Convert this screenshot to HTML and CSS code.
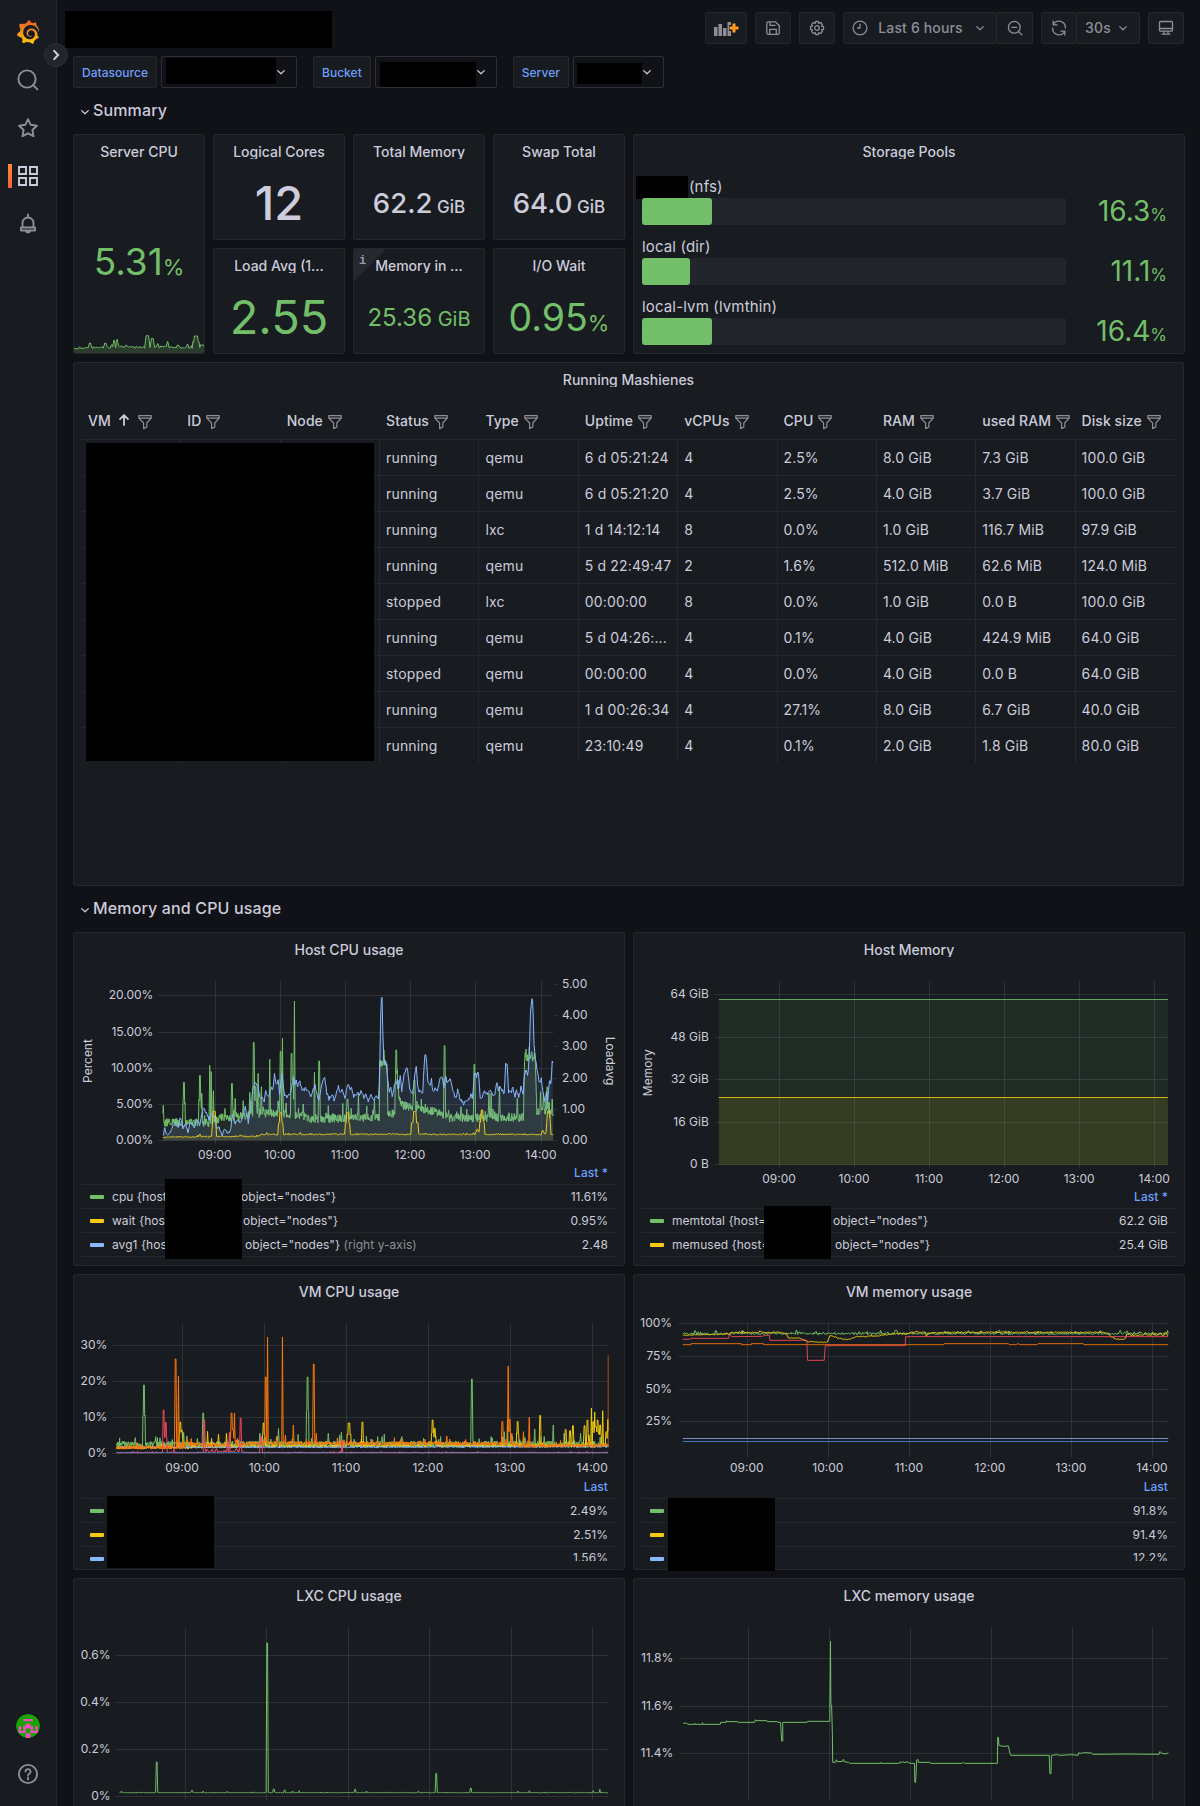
FILE: index.html
```html
<!DOCTYPE html>
<html lang="en">
<head>
  <meta charset="UTF-8">
  <title>Proxmox - Grafana</title>
  <link rel="stylesheet" href="styles.css">
</head>
<body>
  <svg class="defs" width="0" height="0">
    <defs>
      <linearGradient id="logoFill" x1="0" y1="1" x2="0" y2="0">
        <stop offset="0" stop-color="#fbca0a"/><stop offset="1" stop-color="#f05a28"/>
      </linearGradient>
      <symbol id="i-down" viewBox="0 0 16 16"><path d="M4.7 6.6 8 9.7l3.3-3.1"/></symbol>
      <symbol id="i-filter" viewBox="0 0 16 16"><path d="M1.8 1.6h12.4v2.6L9.8 9v4L6.6 14.6V9L1.8 4.2zM1.8 4.2h12.4"/></symbol>
    </defs>
  </svg>

  <nav class="sidebar">
    <svg class="logo" viewBox="0 0 24 24"><path fill="url(#logoFill)" d="M23.02 10.59a8.578 8.578 0 0 0-.862-3.034 8.911 8.911 0 0 0-1.789-2.445c.337-1.342-.413-2.505-.413-2.505-1.292-.08-2.113.4-2.416.62-.052-.02-.102-.044-.154-.064-.22-.089-.446-.172-.677-.247-.231-.073-.47-.14-.711-.197a9.867 9.867 0 0 0-.875-.161C14.557.753 12.94 0 12.94 0c-1.804 1.145-2.147 2.744-2.147 2.744l-.018.093c-.098.029-.2.057-.298.088-.138.042-.275.094-.413.143-.138.055-.275.107-.41.166a8.869 8.869 0 0 0-1.557.87l-.063-.029c-2.497-.955-4.716.195-4.716.195-.203 2.658.996 4.33 1.235 4.636a11.608 11.608 0 0 0-.607 2.635C1.636 12.677.953 15.014.953 15.014c1.926 2.214 4.171 2.351 4.171 2.351.003-.002.006-.002.006-.005.285.509.615.994.986 1.446.156.19.32.371.488.548-.704 2.009.099 3.68.099 3.68 2.144.08 3.553-.937 3.849-1.173a9.784 9.784 0 0 0 3.164.501h.08l.055-.003.107-.002.103-.005.003.002c1.01 1.44 2.788 1.646 2.788 1.646 1.264-1.332 1.337-2.653 1.337-2.94v-.058c0-.02-.003-.039-.003-.06.265-.187.52-.387.758-.6a7.875 7.875 0 0 0 1.415-1.7c1.43.083 2.437-.885 2.437-.885-.236-1.49-1.085-2.216-1.264-2.354l-.018-.013-.016-.013a.217.217 0 0 1-.031-.02c.008-.092.016-.18.02-.27.011-.162.016-.323.016-.48v-.253l-.005-.098-.008-.135a1.891 1.891 0 0 0-.01-.13c-.003-.042-.008-.083-.013-.125l-.016-.124-.018-.122a6.215 6.215 0 0 0-2.032-3.73 6.015 6.015 0 0 0-3.222-1.46 6.292 6.292 0 0 0-.85-.048l-.107.002h-.063l-.044.003-.104.008a4.777 4.777 0 0 0-3.335 1.695c-.332.4-.592.84-.768 1.297a4.594 4.594 0 0 0-.312 1.817l.003.091c.005.055.007.11.013.164a3.615 3.615 0 0 0 .698 1.82 3.53 3.53 0 0 0 1.827 1.282c.33.098.66.14.971.137.039 0 .078 0 .114-.002l.063-.003c.02 0 .041-.003.062-.003.034-.002.065-.007.099-.01.007 0 .018-.003.028-.003l.031-.005.06-.008a1.18 1.18 0 0 0 .112-.02c.036-.008.072-.013.109-.024a2.634 2.634 0 0 0 .914-.415c.028-.02.056-.041.085-.065a.248.248 0 0 0 .039-.35.244.244 0 0 0-.309-.06l-.078.042c-.09.044-.184.083-.283.116a2.476 2.476 0 0 1-.475.096c-.028.003-.054.006-.083.006l-.083.002c-.026 0-.054 0-.08-.002l-.102-.006h-.012l-.024.006c-.016-.003-.031-.003-.044-.006-.031-.002-.06-.007-.091-.01a2.59 2.59 0 0 1-.724-.213 2.557 2.557 0 0 1-.667-.438 2.52 2.52 0 0 1-.805-1.475 2.306 2.306 0 0 1-.029-.444l.006-.122v-.023l.002-.031c.003-.021.003-.04.005-.06a3.163 3.163 0 0 1 1.352-2.29 3.12 3.12 0 0 1 .937-.43 2.946 2.946 0 0 1 .776-.101h.06l.07.002.045.003h.026l.07.005a4.041 4.041 0 0 1 1.635.49 3.94 3.94 0 0 1 1.602 1.662 3.77 3.77 0 0 1 .397 1.414l.005.076.003.075c.002.026.002.05.002.075 0 .024.003.052 0 .07v.065l-.002.073-.008.174a6.195 6.195 0 0 1-.08.639 5.1 5.1 0 0 1-.267.927 5.31 5.31 0 0 1-.624 1.13 5.052 5.052 0 0 1-3.237 2.014 4.82 4.82 0 0 1-.649.066l-.039.003h-.287a6.607 6.607 0 0 1-1.716-.265 6.776 6.776 0 0 1-3.4-2.274 6.75 6.75 0 0 1-.746-1.15 6.616 6.616 0 0 1-.714-2.596l-.005-.083-.002-.02v-.056l-.003-.073v-.096l-.003-.104v-.07l.003-.163c.008-.22.026-.45.054-.678a8.707 8.707 0 0 1 .28-1.355c.128-.444.286-.872.473-1.277a7.04 7.04 0 0 1 1.456-2.1 5.925 5.925 0 0 1 .953-.763c.169-.111.343-.213.524-.306.089-.05.182-.091.273-.135.047-.02.093-.042.138-.062a7.177 7.177 0 0 1 .714-.267l.145-.045c.049-.015.098-.026.148-.041.098-.029.197-.052.296-.076.049-.013.1-.02.15-.033l.15-.032.151-.028.076-.013.075-.01.153-.024c.057-.01.114-.013.171-.023l.169-.021c.036-.003.073-.008.106-.01l.073-.008.036-.003.042-.002c.057-.003.114-.008.171-.01l.086-.006h.023l.037-.003.145-.007a7.999 7.999 0 0 1 1.708.125 7.917 7.917 0 0 1 2.048.68 8.253 8.253 0 0 1 1.672 1.09l.09.077.089.078c.06.052.114.107.171.159.057.052.112.106.166.16.052.055.107.107.159.164a8.671 8.671 0 0 1 1.41 1.978c.012.026.028.052.04.078l.04.078.075.156c.023.051.05.1.07.153l.065.15a8.848 8.848 0 0 1 .45 1.34.19.19 0 0 0 .201.142.186.186 0 0 0 .172-.184c.01-.246.002-.532-.024-.856z"/></svg>
    <svg class="nav-icon" viewBox="0 0 24 24"><circle cx="11" cy="11" r="8.6"/><path d="m17.2 17.2 4.2 4.2"/></svg>
    <svg class="nav-icon" viewBox="0 0 24 24"><path d="m12 3.2 2.7 5.6 6.2.9-4.5 4.3 1.1 6.2-5.5-2.9-5.5 2.9 1.1-6.2-4.5-4.3 6.2-.9z"/></svg>
    <div class="nav-active">
      <svg class="nav-icon" viewBox="0 0 24 24"><path d="M3 3h7v7H3zM14 3h7v7h-7zM3 14h7v7H3zM14 14h7v7h-7z"/></svg>
    </div>
    <svg class="nav-icon" viewBox="0 0 24 24"><path d="M6.5 15.5V11a5.500 5.500 0 0 1 11 0v4.500M12 5.500V2.500M5 15.500h14v3H5zM9.600 18.700a2.500 2.500 0 0 0 4.800 0"/></svg>
    <span class="grow"></span>
    <svg class="avatar" viewBox="0 0 24 24">
      <circle cx="12" cy="12" r="12" fill="#17a300"/>
      <path fill="#f04ec0" d="M7.300 4.900h9.700v2.400H7.300zM9.700 9.700h4.900v2.400H17v4.800h2.300v-4.800h2.400V19h-7.100v-4.500h-4.900V19H2.700v-6.900H5v4.800h2.300v-4.800h2.400zM9.700 19.300h4.900V24H9.700z"/>
    </svg>
    <svg class="nav-icon" viewBox="0 0 24 24"><circle cx="12" cy="12" r="9.100"/><path d="M9.500 9.600a2.500 2.500 0 1 1 3.700 2.200c-.8.500-1.200.8-1.200 1.800M12 15.600v1.800"/></svg>
    <span class="toggle"><svg viewBox="0 0 24 24"><path d="m10 7.500 4.300 4.500-4.300 4.500"/></svg></span>
  </nav>

  <main class="page">
    <header class="toolbar">
      <div class="mask dash-name"></div>
      <div class="tools">
        <button class="btn add"><svg width="26" height="18" viewBox="0 0 26 18"><path class="solid" d="M1 8h3.500v9H1zM5.500 5H9v12H5.500zM10 9h3.500v8H10zM14.500 3H18v3h-2v6h2v5h-3.500z"/><path class="plus" d="M21 4.500v9M16.500 9h9"/></svg></button>
        <button class="btn"><svg class="ic" viewBox="0 0 16 16"><path d="M3.500 1.800h6.800l4 4v7a1.500 1.500 0 0 1-1.500 1.500H3.300a1.500 1.500 0 0 1-1.500-1.500V3.300a1.500 1.500 0 0 1 1.500-1.500M5 2v3.400h5M4.700 14v-4.700h6.600V14"/></svg></button>
        <button class="btn"><svg class="ic" viewBox="0 0 16 16"><circle cx="8" cy="8" r="2.300"/><path d="m6.700 1.500-.5 1.900-1.700-.9-1.900 1.900.9 1.800-2 .500v2.600l2 .500-.9 1.800 1.900 1.900 1.700-.9.500 1.900h2.600l.5-1.900 1.700.9 1.900-1.900-.9-1.800 2-.500V6.700l-2-.500.9-1.800-1.900-1.900-1.700.9-.5-1.900z"/></svg></button>
        <div class="group">
          <button class="btn range"><svg class="ic" viewBox="0 0 16 16"><circle cx="8" cy="8" r="6.900"/><path d="M8 4.200V8H5.500"/></svg><span>Last 6 hours</span><svg class="ic chev"><use href="#i-down"/></svg></button>
          <button class="btn"><svg class="ic" viewBox="0 0 16 16"><circle cx="7.300" cy="7.300" r="5.900"/><path d="M4.800 7.300h5M11.600 11.600l3.200 3.200"/></svg></button>
        </div>
        <div class="group">
          <button class="btn"><svg class="ic" viewBox="0 0 16 16"><path d="M2.200 1v3.900h3.900M2.400 4.700A6.300 6.300 0 0 1 14.300 8M13.800 15v-3.900H9.900M13.600 11.300A6.300 6.300 0 0 1 1.700 8"/></svg></button>
          <button class="btn rate"><span>30s</span><svg class="ic chev"><use href="#i-down"/></svg></button>
        </div>
        <button class="btn"><svg class="ic" viewBox="0 0 16 16"><path d="M2.500 1.500h11a1 1 0 0 1 1 1v7.700a1 1 0 0 1-1 1h-11a1 1 0 0 1-1-1V2.500a1 1 0 0 1 1-1M1.500 8.500h13M6 11.500v2.700M10 11.500v2.700M4 14.200h8"/></svg></button>
      </div>
    </header>

    <div class="vars">
      <div class="var"><label>Datasource</label><div class="select s1"><i class="mask"></i><svg class="ic"><use href="#i-down"/></svg></div></div>
      <div class="var"><label>Bucket</label><div class="select s2"><i class="mask"></i><svg class="ic"><use href="#i-down"/></svg></div></div>
      <div class="var"><label>Server</label><div class="select s3"><i class="mask"></i><svg class="ic"><use href="#i-down"/></svg></div></div>
    </div>

    <h2 class="row-title"><svg class="ic"><use href="#i-down"/></svg>Summary</h2>

    <section class="summary">
      <div class="panel tall">
        <h3>Server CPU</h3>
        <div class="stat green v-cpu">5.31<small>%</small></div>
        <svg id="spark" width="130" height="20"></svg>
      </div>
      <div class="panel"><h3>Logical Cores</h3><div class="stat v-big">12</div></div>
      <div class="panel"><h3>Total Memory</h3><div class="stat v-mem">62.2<small>&nbsp;GiB</small></div></div>
      <div class="panel"><h3>Swap Total</h3><div class="stat v-mem">64.0<small>&nbsp;GiB</small></div></div>
      <div class="panel storage">
        <h3>Storage Pools</h3>
        <div class="pools">
          <div class="pool"><label><i class="mask"></i>(nfs)</label><div class="bar"><b style="width: 16.5%"></b></div><span>16.3<small>%</small></span></div>
          <div class="pool"><label>local (dir)</label><div class="bar"><b style="width: 11.3%"></b></div><span>11.1<small>%</small></span></div>
          <div class="pool"><label>local-lvm (lvmthin)</label><div class="bar"><b style="width: 16.5%"></b></div><span>16.4<small>%</small></span></div>
        </div>
      </div>
      <div class="panel"><h3>Load Avg (1...</h3><div class="stat green v-big">2.55</div></div>
      <div class="panel info"><h3>Memory in ...</h3><div class="stat green v-used">25.36<small>&nbsp;GiB</small></div></div>
      <div class="panel"><h3>I/O Wait</h3><div class="stat green v-wait">0.95<small>%</small></div></div>
    </section>

    <section class="panel machines">
      <h3>Running Mashienes</h3>
      <div class="table-wrap">
        <table>
          <thead>
            <tr>
              <th>VM<svg class="ic sort" viewBox="0 0 16 16"><path d="M8 13V3.500M4 7.200 8 3.200l4 4"/></svg><svg class="ic"><use href="#i-filter"/></svg></th>
              <th>ID<svg class="ic"><use href="#i-filter"/></svg></th>
              <th>Node<svg class="ic"><use href="#i-filter"/></svg></th>
              <th>Status<svg class="ic"><use href="#i-filter"/></svg></th>
              <th>Type<svg class="ic"><use href="#i-filter"/></svg></th>
              <th>Uptime<svg class="ic"><use href="#i-filter"/></svg></th>
              <th>vCPUs<svg class="ic"><use href="#i-filter"/></svg></th>
              <th>CPU<svg class="ic"><use href="#i-filter"/></svg></th>
              <th>RAM<svg class="ic"><use href="#i-filter"/></svg></th>
              <th>used RAM<svg class="ic"><use href="#i-filter"/></svg></th>
              <th>Disk size<svg class="ic"><use href="#i-filter"/></svg></th>
            </tr>
          </thead>
          <tbody>
            <tr><td></td><td></td><td></td><td>running</td><td>qemu</td><td>6 d 05:21:24</td><td>4</td><td>2.5%</td><td>8.0 GiB</td><td>7.3 GiB</td><td>100.0 GiB</td></tr>
            <tr><td></td><td></td><td></td><td>running</td><td>qemu</td><td>6 d 05:21:20</td><td>4</td><td>2.5%</td><td>4.0 GiB</td><td>3.7 GiB</td><td>100.0 GiB</td></tr>
            <tr><td></td><td></td><td></td><td>running</td><td>lxc</td><td>1 d 14:12:14</td><td>8</td><td>0.0%</td><td>1.0 GiB</td><td>116.7 MiB</td><td>97.9 GiB</td></tr>
            <tr><td></td><td></td><td></td><td>running</td><td>qemu</td><td>5 d 22:49:47</td><td>2</td><td>1.6%</td><td>512.0 MiB</td><td>62.6 MiB</td><td>124.0 MiB</td></tr>
            <tr><td></td><td></td><td></td><td>stopped</td><td>lxc</td><td>00:00:00</td><td>8</td><td>0.0%</td><td>1.0 GiB</td><td>0.0 B</td><td>100.0 GiB</td></tr>
            <tr><td></td><td></td><td></td><td>running</td><td>qemu</td><td>5 d 04:26:...</td><td>4</td><td>0.1%</td><td>4.0 GiB</td><td>424.9 MiB</td><td>64.0 GiB</td></tr>
            <tr><td></td><td></td><td></td><td>stopped</td><td>qemu</td><td>00:00:00</td><td>4</td><td>0.0%</td><td>4.0 GiB</td><td>0.0 B</td><td>64.0 GiB</td></tr>
            <tr><td></td><td></td><td></td><td>running</td><td>qemu</td><td>1 d 00:26:34</td><td>4</td><td>27.1%</td><td>8.0 GiB</td><td>6.7 GiB</td><td>40.0 GiB</td></tr>
            <tr><td></td><td></td><td></td><td>running</td><td>qemu</td><td>23:10:49</td><td>4</td><td>0.1%</td><td>2.0 GiB</td><td>1.8 GiB</td><td>80.0 GiB</td></tr>
          </tbody>
        </table>
        <div class="mask"></div>
      </div>
    </section>

    <h2 class="row-title"><svg class="ic"><use href="#i-down"/></svg>Memory and CPU usage</h2>

    <section class="charts">
      <div class="panel host">
        <h3>Host CPU usage</h3>
        <svg id="hostCpu" width="550" height="195"></svg>
        <div class="legend">
          <div class="legend-head">Last *</div>
          <div class="item c-green"><span class="name n1">cpu {host</span><span>object="nodes"}</span><em>11.61%</em></div>
          <div class="item c-yellow"><span class="name n2">wait {hos</span><span>object="nodes"}</span><em>0.95%</em></div>
          <div class="item c-blue"><span class="name n3">avg1 {hos</span><span>object="nodes"} <u>(right y-axis)</u></span><em>2.48</em></div>
          <div class="mask m-host"></div>
        </div>
      </div>
      <div class="panel host">
        <h3>Host Memory</h3>
        <svg id="hostMem" width="550" height="219"></svg>
        <div class="legend">
          <div class="legend-head">Last *</div>
          <div class="item c-green"><span class="name n4">memtotal {host=</span><span>object="nodes"}</span><em>62.2 GiB</em></div>
          <div class="item c-yellow"><span class="name n5">memused {host=</span><span>object="nodes"}</span><em>25.4 GiB</em></div>
          <div class="mask m-mem"></div>
        </div>
      </div>
      <div class="panel vm">
        <h3>VM CPU usage</h3>
        <svg id="vmCpu" width="550" height="167"></svg>
        <div class="legend">
          <div class="legend-head">Last</div>
          <div class="item c-green"><em>2.49%</em></div>
          <div class="item c-yellow"><em>2.51%</em></div>
          <div class="item c-blue cut"><em>1.56%</em></div>
          <div class="mask m-vm1"></div>
        </div>
      </div>
      <div class="panel vm">
        <h3>VM memory usage</h3>
        <svg id="vmMem" width="550" height="167"></svg>
        <div class="legend">
          <div class="legend-head">Last</div>
          <div class="item c-green"><em>91.8%</em></div>
          <div class="item c-yellow"><em>91.4%</em></div>
          <div class="item c-blue cut"><em>12.2%</em></div>
          <div class="mask m-vm2"></div>
        </div>
      </div>
      <div class="panel lxc">
        <h3>LXC CPU usage</h3>
        <svg id="lxcCpu" width="550" height="192"></svg>
      </div>
      <div class="panel lxc">
        <h3>LXC memory usage</h3>
        <svg id="lxcMem" width="550" height="192"></svg>
      </div>
    </section>
  </main>
  <script src="charts.js"></script>
</body>
</html>
```
FILE: styles.css
```css
* {
  box-sizing: border-box;
}

body {
  margin: 0;
  height: 1806px;
  overflow: hidden;
  display: flex;
  background: #111217;
  color: #ccccdc;
  font: 14px/20px Inter, "Liberation Sans", sans-serif;
  letter-spacing: 0.01071em;
}

svg {
  display: block;
}

.defs {
  position: absolute;
}

.mask {
  display: block;
  background: #000;
}

.ic {
  width: 16px;
  height: 16px;
  flex: none;
  fill: none;
  stroke: currentColor;
  stroke-width: 1.3;
  stroke-linejoin: round;
  stroke-linecap: round;
}

/* sidebar */
.sidebar {
  position: relative;
  width: 57px;
  height: 1806px;
  flex: none;
  padding: 20px 0;
  display: flex;
  flex-direction: column;
  align-items: center;
  gap: 24px;
  background: #181b1f;
  border-right: 1px solid #25272c;
}

.logo {
  width: 24px;
  height: 24px;
}

.nav-icon {
  width: 24px;
  height: 24px;
  fill: none;
  stroke: #8e8e9a;
  stroke-width: 1.9;
  stroke-linecap: round;
  stroke-linejoin: round;
}

.nav-active {
  width: 40px;
  display: flex;
  justify-content: center;
  background: linear-gradient(#ff8833, #f55f3e) 0 0 / 4px 24px no-repeat;
}

.nav-active .nav-icon {
  stroke: #ccccdc;
  stroke-linejoin: miter;
}

.grow {
  flex: 1;
}

.avatar {
  width: 24px;
  height: 24px;
  border-radius: 50%;
}

.toggle {
  position: absolute;
  left: 44px;
  top: 43px;
  width: 24px;
  height: 24px;
  border-radius: 50%;
  background: #22252b;
  border: 1px solid #2d2f36;
}

.toggle svg {
  width: 22px;
  height: 22px;
  fill: none;
  stroke: #ccccdc;
  stroke-width: 2.3;
  stroke-linecap: round;
}

/* toolbar */
.page {
  flex: 1;
  padding: 0 15px 0 16px;
}

.toolbar {
  height: 56px;
  padding-right: 1px;
  display: flex;
  justify-content: space-between;
  margin-left: -8px;
}

.dash-name {
  width: 267px;
  height: 37px;
  margin-top: 11px;
}

.tools {
  display: flex;
  gap: 8px;
  padding-top: 12px;
}

.group {
  display: flex;
}

.group .btn + .btn {
  border-left: 0;
  width: 36px;
}

.btn {
  width: 36px;
  height: 32px;
  padding: 0;
  display: flex;
  align-items: center;
  justify-content: center;
  background: #181b1f;
  border: 1px solid #25272c;
  border-radius: 2px;
  color: #8e8e99;
  font: inherit;
  font-weight: 500;
  letter-spacing: 0.01071em;
}

.btn.add {
  width: 42px;
}

.solid {
  fill: #8e8e99;
}

.plus {
  stroke: #ff9a1f;
  stroke-width: 3;
}

.btn.range {
  width: 154px;
  gap: 9px;
}

.range span {
  margin-left: 1px;
}

.group .btn.rate {
  width: 63px;
  gap: 4px;
}

/* template variables */
.vars {
  display: flex;
  gap: 16px;
}

.var {
  display: flex;
  gap: 4px;
}

.var label {
  height: 32px;
  padding: 0 8px;
  background: #181b1f;
  border: 1px solid #25272c;
  border-radius: 2px;
  color: #6e9fff;
  font-size: 12px;
  font-weight: 500;
  line-height: 31px;
  letter-spacing: 0.002em;
}

.select {
  height: 32px;
  display: flex;
  border: 1px solid #2d2f36;
  border-radius: 2px;
  padding-left: 4px;
}

.select .ic {
  margin: 7px 0 0 -3px;
}

.s1 { width: 136px; }
.s1 .mask { width: 110px; height: 26px; margin-top: 1px; }
.s2 { width: 122px; }
.s2 .mask { width: 96px; height: 25px; margin-top: 5px; }
.s3 { width: 91px; padding-left: 3px; }
.s3 .mask { width: 65px; height: 21px; margin-top: 6px; }

.row-title {
  height: 30px;
  margin: 8px 0;
  padding: 0 0 2px 4px;
  display: flex;
  align-items: center;
  font-size: 16px;
  font-weight: 500;
}

.row-title .ic {
  margin-top: 3px;
}

/* panels */
.panel {
  background: #181b1f;
  border: 1px solid #25272c;
  border-radius: 2px;
  overflow: hidden;
}

.panel h3 {
  height: 16px;
  margin: 8px 0 11px;
  overflow: hidden;
  text-align: center;
  font-size: 14px;
  font-weight: 500;
  line-height: 18px;
  letter-spacing: 0;
}

.summary {
  display: grid;
  grid-template-columns: repeat(4, 132px) 552px;
  grid-template-rows: 106px 106px;
  gap: 8px;
}

.tall,
.storage {
  grid-row: span 2;
}

.tall {
  display: flex;
  flex-direction: column;
  justify-content: space-between;
}

.stat {
  text-align: center;
  font-weight: 500;
  white-space: nowrap;
  letter-spacing: 0;
}

.green {
  color: #73bf69;
  font-weight: 400;
}

.v-cpu { font-size: 37px; line-height: 40px; margin-top: 25px; }
.v-cpu small { font-size: 22px; }
.v-big { font-size: 47px; line-height: 66px; }
.v-mem { font-size: 27.5px; line-height: 67px; }
.v-mem small { font-size: 17px; }
.v-used { font-size: 24px; line-height: 68px; }
.v-used small { font-size: 20px; }
.v-wait { font-size: 37.5px; line-height: 67px; }
.v-wait small { font-size: 22px; }

.info {
  position: relative;
}

.info::before {
  content: "";
  position: absolute;
  left: 0;
  top: 0;
  border: 16px solid transparent;
  border-color: #25282f transparent transparent #25282f;
}

.info::after {
  content: "i";
  position: absolute;
  left: 5px;
  top: 1px;
  color: #9a9aa6;
  font: bold 12px "Liberation Mono", monospace;
  line-height: 22px;
}

.pools {
  padding: 7px 8px 0;
}

.pool {
  display: grid;
  grid-template-columns: 424px 1fr;
  grid-template-rows: 20px 27px;
  row-gap: 1px;
  margin-bottom: 12px;
}

.pool label {
  grid-column: span 2;
  display: flex;
  font-size: 15px;
}

.pool label .mask {
  width: 52px;
  height: 23px;
  margin: -1px 1px 0 -6px;
}

.bar {
  background: #22252b;
  border-radius: 2px;
}

.bar b {
  display: block;
  height: 27px;
  border-radius: 3px;
  background: #73bf69;
}

.pool span {
  padding-right: 9px;
  text-align: right;
  color: #73bf69;
  font-size: 28px;
  line-height: 27px;
  letter-spacing: 0;
}

.pool small {
  font-size: 17px;
}

/* machines table */
.machines {
  width: 1111px;
  height: 524px;
  margin-top: 8px;
}

.table-wrap {
  position: relative;
  padding: 5px 8px;
}

.table-wrap .mask {
  position: absolute;
  left: 12px;
  top: 45px;
  width: 288px;
  height: 318px;
}

table {
  width: 1093px;
  table-layout: fixed;
  border-collapse: separate;
  border-spacing: 0;
}

th {
  height: 36px;
  padding: 0 0 0 6px;
  text-align: left;
  font-weight: 500;
  letter-spacing: 0.004em;
  white-space: nowrap;
}

th .ic {
  display: inline-block;
  margin-left: 4px;
  vertical-align: -4px;
  color: #8e8e99;
  stroke-width: 1.2;
}

th .sort {
  color: #ccccdc;
  stroke-width: 1.8;
  margin-left: 5px;
  margin-right: 1px;
  vertical-align: -2px;
}

td {
  height: 36px;
  padding: 0 0 0 6px;
  border-top: 1px solid #25272c;
  border-right: 1px solid #25272c;
  white-space: nowrap;
}

td:last-child {
  border-right: 0;
}

/* charts */
.charts {
  display: grid;
  grid-template-columns: 552px 552px;
  gap: 8px;
}

.host { height: 334px; }
.vm { height: 296px; overflow: visible; }
.lxc { height: 296px; }

.charts text {
  font-size: 12px;
  fill: #ccccdc;
  letter-spacing: 0;
}

.legend {
  position: relative;
  margin: 0 8px;
  font-size: 12px;
  letter-spacing: 0.004em;
}

.legend-head {
  height: 21px;
  padding-right: 8px;
  text-align: right;
  line-height: 20px;
  font-weight: 500;
  color: #6e9fff;
}

.item {
  height: 24px;
  padding: 0 8px;
  display: flex;
  align-items: center;
  border-top: 1px solid #25272c;
  white-space: pre;
}

.host .item:nth-last-child(2) {
  height: 25px;
  border-bottom: 1px solid #25272c;
}

.item::before {
  content: "";
  width: 14px;
  height: 4px;
  margin-right: 8px;
  border-radius: 1px;
}

.c-green::before { background: #73bf69; }
.c-yellow::before { background: #f2cc0c; }
.c-blue::before { background: #8ab8ff; }

.item em {
  margin-left: auto;
  font-style: normal;
}

.item u {
  color: #8e8e99;
  text-decoration: none;
}

.item.cut em {
  align-self: flex-start;
  height: 14px;
  overflow: hidden;
  line-height: 21px;
}

.n1 { width: 129px; }
.n2 { width: 131px; }
.n3 { width: 133px; }
.n4 { width: 161px; }
.n5 { width: 163px; }

.legend .mask {
  position: absolute;
}

.m-host { left: 83px; top: 16px; width: 77px; height: 80px; }
.m-mem { left: 122px; top: 19px; width: 67px; height: 53px; }
.m-vm1 { left: 25px; top: 19px; width: 107px; height: 72px; }
.m-vm2 { left: 26px; top: 21px; width: 107px; height: 73px; }
```
FILE: charts.js
```js
const GREEN = "#73bf69", YELLOW = "#f2cc0c", BLUE = "#8ab8ff", ORANGE = "#ff780a", RED = "#f2495c", DARKBLUE = "#5794f2";

let seed = 7;
function rand() {
  seed = (seed * 16807) % 2147483647;
  return seed / 2147483647;
}

// value of a broken line at x
function at(knots, x) {
  for (let i = 1; i < knots.length; i++) {
    if (x <= knots[i][0]) {
      const [x0, y0] = knots[i - 1], [x1, y1] = knots[i];
      return x1 === x0 ? y1 : y0 + (y1 - y0) * (x - x0) / (x1 - x0);
    }
  }
  return knots[knots.length - 1][1];
}

// base line with jitter and spikes [x, top, halfWidth]
function noisy(knots, amp, spikes = [], step = 1, burst = 0.06) {
  const out = [];
  const end = knots[knots.length - 1][0];
  for (let x = knots[0][0]; x <= end; x += step) {
    let y = at(knots, x) + (rand() - 0.5) * amp;
    if (rand() < burst) y -= amp * rand() * 1.3;
    for (const [sx, top, w = 1.6] of spikes) {
      const d = Math.abs(x - sx);
      if (d <= w) y = Math.min(y, d <= w / 2 ? top : top + (y - top) * 0.5);
    }
    out.push([x, y]);
  }
  return out;
}

function chart(id, c) {
  const X = v => v / c.kx - c.dx;
  const Y = v => v / 3 - c.dy;
  const snap = v => Math.floor(v) + 0.5;
  let s = "";
  const grid = 'stroke="rgba(240,250,255,0.1)"';
  (c.y || []).forEach(([v, label]) => {
    s += `<path ${grid} d="M${X(c.left)} ${snap(Y(v))}H${X(c.right)}"/>`;
    s += `<text x="${X(c.labelX)}" y="${Y(v) + 3.7}" text-anchor="end">${label}</text>`;
  });
  (c.x || []).forEach((v, i) => {
    s += `<path ${grid} d="M${snap(X(v))} ${Y(c.top)}V${Y(c.bottom)}"/>`;
    if (c.timeY) s += `<text x="${X(v) - 0.4}" y="${Y(c.timeY) + 4.5}" text-anchor="middle">${String(9 + i).padStart(2, "0")}:00</text>`;
  });
  (c.y2 || []).forEach(([v, label]) => {
    s += `<path ${grid} d="M${X(1357)} ${snap(Y(v))}h4"/>`;
    s += `<text x="${X(1381)}" y="${Y(v) + 4}">${label}</text>`;
  });
  (c.names || []).forEach(([x, y, text, deg]) => {
    s += `<text transform="translate(${X(x)} ${Y(y)}) rotate(${deg})" y="4" text-anchor="middle">${text}</text>`;
  });
  c.series.forEach(({ pts, color, fill = 0, opacity = 1 }) => {
    const d = pts.map(([x, y]) => X(x).toFixed(2) + " " + Y(y).toFixed(2)).join("L");
    if (fill) s += `<path fill="${color}" fill-opacity="${fill}" d="M${d}V${Y(c.zero)}H${X(pts[0][0])}Z"/>`;
    s += `<path fill="none" stroke="${color}" stroke-opacity="${opacity}" d="M${d}"/>`;
  });
  document.getElementById(id).innerHTML = s;
}

chart("spark", {
  kx: 2.613, dx: 74, dy: 333, zero: 1062,
  series: [{
    color: GREEN, fill: 0.2,
    pts: noisy([[192, 1046], [215, 1044], [330, 1040], [380, 1043], [420, 1040], [500, 1043], [535, 1040]], 6,
      [[235, 1029, 4], [275, 1029, 3], [298, 1020, 3], [306, 1018, 3], [330, 1035, 3], [385, 1007, 6], [398, 1015, 4], [412, 1030, 3], [438, 1024, 3], [465, 1035, 3], [490, 1032, 3], [512, 1008, 9], [529, 1034, 3]], 2)
  }]
});

chart("hostCpu", {
  kx: 2.751, dx: 14, dy: 88, left: 271, right: 1357, labelX: 257, top: 304, bottom: 792, timeY: 824, zero: 781,
  y: [[346, "20.00%"], [457, "15.00%"], [565, "10.00%"], [673, "5.00%"], [781, "0.00%"]],
  y2: [[312, "5.00"], [405, "4.00"], [498, "3.00"], [594, "2.00"], [688, "1.00"], [780, "0.00"]],
  x: [427, 606, 785, 964, 1143, 1324],
  names: [[76, 543, "Percent", -90], [1512, 543, "Loadavg", 90]],
  series: [
    {
      color: GREEN, fill: 0.1,
      pts: noisy([[283, 728], [410, 728], [440, 714], [500, 712], [530, 700], [600, 700], [655, 705], [700, 718], [878, 710], [880, 548], [900, 548], [902, 700], [925, 700], [928, 640], [940, 675], [1050, 700], [1070, 714], [1275, 712], [1278, 535], [1307, 530], [1312, 700], [1330, 690], [1357, 705]], 26,
        [[284, 676], [341, 607, 3], [385, 586, 3], [390, 640], [412, 556], [416, 575], [422, 632], [473, 610, 2], [482, 655], [504, 662], [522, 637], [533, 487, 2], [538, 620, 3], [545, 580], [554, 620], [577, 538], [600, 663], [607, 514, 2], [612, 474], [637, 520, 2], [640, 600, 4], [645, 363], [669, 672], [700, 577], [713, 543, 2], [791, 657, 3], [821, 640], [865, 657], [891, 510], [925, 510, 3], [930, 600], [975, 600, 3], [1058, 497, 2.5], [1103, 680], [1140, 553, 2.5], [1180, 640], [1186, 640], [1209, 620], [1258, 655], [1280, 517], [1298, 515], [1322, 635], [1330, 640], [1340, 620], [1354, 657]])
    },
    {
      color: YELLOW, fill: 0.1,
      pts: noisy([[283, 771], [545, 769], [555, 763], [1357, 763]], 4,
        [[385, 762, 3], [424, 694, 6], [607, 697, 6], [791, 697, 6], [976, 694, 9], [1148, 748, 5], [1161, 690, 6], [1328, 752, 3], [1344, 694, 6]], 2)
    },
    {
      color: BLUE, fill: 0.12,
      pts: noisy([[284, 765], [288, 748], [296, 765], [304, 760], [310, 735], [318, 728], [325, 740], [332, 710], [338, 745], [346, 735], [352, 755], [360, 725], [368, 745], [376, 720], [384, 735], [390, 700], [396, 680], [402, 700], [410, 720], [416, 700], [424, 705], [430, 735], [438, 745], [446, 765], [454, 750], [462, 765], [470, 745], [474, 705], [480, 730], [488, 722], [496, 725], [504, 700], [510, 682], [518, 725], [526, 660], [532, 620], [538, 605], [544, 615], [550, 655], [554, 650], [562, 660], [566, 636], [574, 645], [582, 620], [586, 630], [590, 575], [593, 610], [600, 605], [604, 640], [610, 585], [618, 645], [626, 650], [634, 640], [642, 590], [646, 612], [650, 600], [654, 620], [658, 600], [666, 630], [676, 628], [686, 640], [690, 650], [702, 615], [706, 640], [712, 665], [718, 620], [727, 585], [734, 640], [740, 658], [748, 640], [754, 660], [766, 617], [772, 640], [776, 625], [784, 655], [791, 610], [796, 625], [802, 622], [808, 650], [816, 640], [824, 645], [828, 630], [836, 650], [842, 638], [848, 665], [856, 645], [864, 658], [870, 650], [877, 655], [880, 530], [883, 360], [886, 352], [889, 500], [892, 555], [896, 540], [902, 600], [906, 635], [910, 622], [914, 648], [920, 620], [928, 600], [932, 628], [936, 590], [940, 630], [946, 590], [955, 556], [962, 625], [970, 640], [980, 555], [985, 625], [990, 635], [998, 638], [1003, 530], [1007, 527], [1012, 605], [1018, 610], [1022, 600], [1026, 635], [1032, 620], [1038, 630], [1044, 600], [1050, 585], [1056, 625], [1060, 585], [1064, 605], [1074, 600], [1082, 635], [1088, 655], [1094, 630], [1100, 655], [1110, 672], [1116, 660], [1122, 665], [1130, 645], [1135, 660], [1140, 575], [1146, 590], [1151, 567], [1156, 655], [1162, 650], [1168, 632], [1176, 645], [1184, 625], [1190, 650], [1196, 640], [1202, 605], [1206, 630], [1210, 615], [1216, 635], [1222, 635], [1226, 555], [1230, 552], [1234, 635], [1240, 640], [1246, 625], [1252, 650], [1256, 630], [1262, 655], [1268, 620], [1274, 640], [1278, 580], [1283, 570], [1287, 590], [1291, 530], [1294, 400], [1298, 362], [1301, 368], [1304, 490], [1308, 540], [1314, 575], [1318, 605], [1324, 598], [1328, 625], [1334, 670], [1338, 640], [1342, 660], [1346, 605], [1351, 610], [1354, 540], [1357, 548]], 12, [], 2, 0)
    }
  ]
});

chart("hostMem", {
  kx: 2.703, dx: 14, dy: 88, left: 257, right: 1483, labelX: 240, top: 304, bottom: 864, timeY: 895, zero: 854,
  y: [[342, "64 GiB"], [472, "48 GiB"], [598, "32 GiB"], [727, "16 GiB"], [853, "0 B"]],
  x: [431, 634, 836, 1039, 1242, 1445],
  names: [[77, 578, "Memory", -90]],
  series: [
    { color: GREEN, fill: 0.1, opacity: 0.85, pts: [[267, 358.500], [1481, 358.500]] },
    { color: YELLOW, fill: 0.1, opacity: 0.85, pts: [[267, 652.500], [1481, 652.500]] }
  ]
});

chart("vmCpu", {
  kx: 2.751, dx: 14, dy: 50, left: 144, right: 1508, labelX: 130, top: 190, bottom: 594, timeY: 623,
  y: [[256, "30%"], [364, "20%"], [472, "10%"], [580, "0%"]],
  x: [337, 563, 788, 1013, 1239, 1465],
  series: [
    {
      color: GREEN,
      pts: noisy([[155, 553], [1508, 553]], 20,
        [[207, 533], [231, 375, 3], [263, 530], [340, 517], [394, 459, 2], [550, 520], [601, 505], [681, 351, 3], [738, 520], [774, 517], [886, 530], [940, 530], [1133, 357, 2.5], [1186, 530], [1222, 515], [1231, 480], [1306, 507], [1357, 495], [1432, 520]])
    },
    {
      color: YELLOW,
      pts: noisy([[155, 563], [330, 563], [560, 558], [1430, 557], [1508, 553]], 8,
        [[331, 486, 3], [335, 510, 3], [406, 514], [417, 535], [436, 522], [458, 520], [560, 489, 3], [795, 489, 5], [832, 486, 2.5], [1025, 480, 3], [1031, 505, 3], [1259, 484, 3], [1321, 466, 2], [1391, 508, 2], [1403, 512, 2], [1411, 497, 2], [1443, 497, 2], [1451, 480, 2], [1455, 525], [1462, 444], [1467, 485, 2], [1471, 456], [1474, 500, 2], [1479, 480, 3], [1486, 495, 3], [1493, 452, 1.5], [1503, 515, 2], [1507, 478]])
    },
    { color: BLUE, pts: noisy([[155, 563], [500, 562], [1508, 560]], 4) },
    {
      color: ORANGE,
      pts: noisy([[155, 563], [340, 562], [350, 553], [445, 555], [560, 549], [1240, 551], [1270, 558], [1508, 556]], 11,
        [[318, 297, 2], [326, 348, 1.500], [350, 538, 3], [472, 459, 2], [480, 459], [476, 510, 2], [566, 351, 2], [571, 231], [596, 530], [612, 231], [620, 525], [642, 495], [698, 312, 2.500], [705, 520], [1064, 528], [1217, 484, 2], [1233, 318, 1.5], [1237, 478, 2], [1243, 520], [1275, 515], [1291, 472, 1.500]])
    },
    { color: ORANGE, opacity: 0.6, pts: [[1508, 560], [1508, 286]] },
    {
      color: RED,
      pts: noisy([[155, 578], [395, 578], [500, 574], [510, 578], [1508, 578]], 3,
        [[285, 450, 2.500], [291, 487, 3], [314, 566], [397, 480, 2], [405, 568, 3], [418, 568, 3], [430, 566, 3], [461, 545], [466, 517, 1.5], [485, 566, 3], [497, 474, 2.500], [553, 530, 3], [776, 540, 1.500]])
    },
    { color: DARKBLUE, opacity: 0.75, pts: noisy([[155, 578], [1508, 578]], 2) }
  ]
});

chart("vmMem", {
  kx: 2.703, dx: 14, dy: 50, left: 158, right: 1483, labelX: 141, top: 190, bottom: 592, timeY: 623,
  y: [[190, "100%"], [289, "75%"], [388, "50%"], [484, "25%"]],
  x: [344, 563, 782, 1001, 1220, 1439],
  series: [
    { color: GREEN, pts: noisy([[170, 221], [1482, 221]], 6, [[203, 212, 2], [259, 212, 2], [477, 211, 2], [746, 211, 5], [942, 212, 2], [1025, 211, 2], [1298, 212, 2], [1352, 211, 2]], 2, 0.12) },
    { color: YELLOW, pts: noisy([[170, 226], [210, 224], [294, 223], [300, 218], [430, 217], [450, 221], [455, 234], [485, 234], [505, 245], [560, 247], [568, 226], [590, 234], [615, 239], [640, 230], [700, 228], [740, 221], [780, 222], [785, 217], [825, 217], [828, 229], [834, 219], [900, 217], [1310, 217], [1340, 238], [1365, 238], [1370, 222], [1380, 229], [1395, 225], [1482, 225]], 3, [[1378, 220, 2], [1420, 217, 3], [1440, 217, 3], [1460, 218, 3], [1475, 217, 3]], 2) },
    { color: ORANGE, opacity: 0.85, pts: [[170, 254], [192, 254], [192, 251], [328, 251], [328, 254], [355, 254], [355, 251], [388, 251], [388, 254], [875, 254], [876, 251], [1050, 251], [1052, 254], [1070, 254], [1076, 251], [1082, 254], [1128, 254], [1130, 251], [1252, 251], [1254, 254], [1482, 254]] },
    { color: RED, opacity: 0.9, pts: [[170, 238], [188, 238], [192, 235], [294, 235], [296, 221], [302, 230], [385, 229], [390, 226], [404, 226], [405, 241], [490, 241], [498, 238], [505, 242], [507, 301], [552, 301], [555, 257], [771, 257], [772, 230], [1482, 230]] },
    { color: BLUE, opacity: 0.75, pts: [[170, 535.500], [1482, 535.500]] },
    { color: DARKBLUE, opacity: 0.75, pts: [[170, 544.500], [1482, 544.500]] }
  ]
});

chart("lxcCpu", {
  kx: 2.751, dx: 14, dy: 54, left: 152, right: 1508, labelX: 139, top: 202, bottom: 720,
  y: [[286, "0.6%"], [427, "0.4%"], [568, "0.2%"], [709, "0%"]],
  x: [346, 568, 794, 1017, 1242, 1465],
  series: [{
    color: GREEN,
    pts: noisy([[164, 698], [1508, 698]], 1.5,
      [[169, 693], [266, 606, 2], [363, 691, 2], [394, 693], [460, 694], [570, 249, 2], [588, 687, 2], [618, 690, 2], [640, 693], [658, 692], [812, 688, 2], [843, 693], [986, 693], [1035, 640, 2], [1130, 684, 2], [1260, 693], [1291, 692], [1467, 692], [1485, 688]])
  }]
});

chart("lxcMem", {
  kx: 2.703, dx: 14, dy: 54, left: 161, right: 1483, labelX: 144, top: 202, bottom: 720,
  y: [[295, "11.8%"], [439, "11.6%"], [580, "11.4%"]],
  x: [347, 566, 785, 1004, 1223, 1439],
  series: [{
    color: GREEN,
    pts: [[171, 490], [180, 489], [183, 493], [202, 493], [203, 490], [204, 493], [222, 493], [223, 488], [224, 493], [271, 493], [272, 487], [287, 487], [288, 482], [289, 485], [317, 485], [319, 487], [364, 487], [366, 479], [368, 482], [397, 482], [398, 485], [425, 485], [427, 487], [434, 487], [437, 543], [440, 543], [440, 487], [506, 487], [507, 484], [567, 484], [569, 243], [570, 436], [572, 436], [574, 520], [575, 607], [582, 607], [585, 599], [587, 605], [602, 604], [604, 598], [606, 605], [618, 607], [621, 610], [704, 610], [705, 607], [706, 610], [755, 610], [757, 605], [761, 608], [765, 605], [770, 608], [776, 605], [784, 610], [796, 610], [797, 667], [799, 667], [802, 600], [805, 598], [807, 607], [837, 607], [839, 610], [925, 610], [928, 607], [931, 610], [1020, 610], [1021, 532], [1023, 532], [1024, 556], [1035, 559], [1050, 558], [1054, 580], [1056, 586], [1160, 586], [1162, 641], [1165, 641], [1166, 586], [1180, 584], [1190, 586], [1220, 584], [1238, 586], [1240, 578], [1244, 580], [1256, 578], [1275, 579], [1278, 583], [1365, 582], [1457, 583], [1459, 575], [1465, 580], [1476, 582], [1482, 578]]
  }]
});
```
